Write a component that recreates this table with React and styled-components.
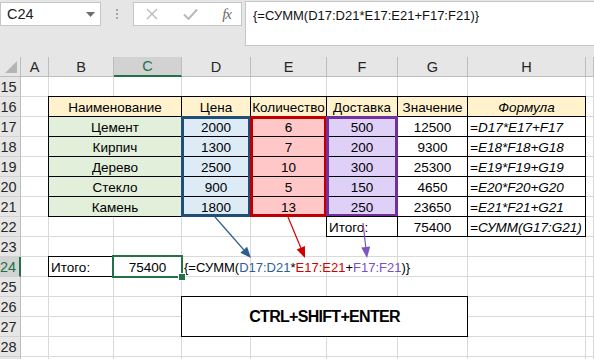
import React from "react";
import styled, { createGlobalStyle } from "styled-components";

const GlobalStyle = createGlobalStyle`
  html, body { margin: 0; padding: 0; background: #ffffff; }
  body { font-family: "Liberation Sans", Arial, sans-serif; overflow: hidden; }
`;

const GREEN = "#217346";
const GRID = "#d9d9d9";

const Window = styled.div`
  width: 594px;
  height: 359px;
  overflow: hidden;
  display: flex;
  flex-direction: column;
  background: #fff;
`;

/* ---------- formula bar ---------- */

const Toolbar = styled.div`
  height: 57px;
  flex: none;
  background: #e6e6e6;
  display: flex;
  align-items: flex-start;
  padding-top: 2px;
  box-sizing: border-box;
`;

const NameBox = styled.div`
  width: 101px;
  height: 24px;
  box-sizing: border-box;
  background: #fff;
  border: 1px solid #c6c6c6;
  display: flex;
  align-items: center;
  justify-content: space-between;
  padding: 0 5px 0 6px;
  font-size: 14.5px;
  color: #222;
`;

const Grip = styled.div`
  width: 32px;
  height: 24px;
  display: flex;
  flex-direction: column;
  align-items: center;
  justify-content: center;
  gap: 2px;
`;

const GripDot = styled.span`
  width: 2px;
  height: 2px;
  background: #a6a6a6;
`;

const FxBox = styled.div`
  width: 109px;
  height: 24px;
  box-sizing: border-box;
  background: #fff;
  border: 1px solid #c6c6c6;
  display: flex;
  align-items: center;
  justify-content: space-between;
  padding: 0 10px 0 12px;
`;

const FxLabel = styled.span`
  font-family: "Liberation Serif", "Times New Roman", serif;
  font-style: italic;
  font-size: 15px;
  color: #6a6a6a;
  letter-spacing: -1px;
`;

const FormulaInput = styled.div`
  flex: 1;
  margin-left: 3px;
  margin-top: -1px;
  height: 45px;
  box-sizing: border-box;
  background: #fff;
  border: 1px solid #c6c6c6;
  border-right: none;
  padding: 6px 0 0 7px;
  font-size: 13px;
  color: #111;
`;

/* ---------- sheet grid ---------- */

const Sheet = styled.div`
  position: relative;
  display: grid;
  grid-template-columns: 21px 28px 65px 68px 69px 76px 71px 70px 118px 1fr;
  grid-template-rows: repeat(17, 20px);
  font-size: 13.5px;
  color: #000;
`;

const Corner = styled.div`
  grid-column: 1;
  grid-row: 1;
  background: #e6e6e6;
  border-right: 1px solid #bdbdbd;
  border-bottom: 1px solid #bdbdbd;
  display: flex;
  align-items: flex-end;
  justify-content: flex-end;
  padding: 0 3px 3px 0;
`;

const ColHead = styled.div`
  grid-column: ${(p) => p.$col};
  grid-row: 1;
  background: ${(p) => (p.$active ? "#d2d2d2" : "#e6e6e6")};
  border-right: 1px solid #bdbdbd;
  border-bottom: ${(p) => (p.$active ? `2px solid ${GREEN}` : "1px solid #bdbdbd")};
  display: flex;
  align-items: center;
  justify-content: center;
  font-size: 14.5px;
  color: ${(p) => (p.$active ? GREEN : "#262626")};
`;

const RowHead = styled.div`
  grid-column: 1;
  grid-row: ${(p) => p.$row};
  background: ${(p) => (p.$active ? "#d2d2d2" : "#e6e6e6")};
  border-right: ${(p) => (p.$active ? `2px solid ${GREEN}` : "1px solid #bdbdbd")};
  border-bottom: 1px solid #d0d0d0;
  display: flex;
  align-items: center;
  justify-content: center;
  padding-right: 3px;
  font-size: 14.5px;
  color: ${(p) => (p.$active ? GREEN : "#262626")};
`;

const GridCell = styled.div`
  grid-column: ${(p) => p.$col};
  grid-row: ${(p) => p.$row};
  border-right: 1px solid ${GRID};
  border-bottom: 1px solid ${GRID};
`;

const DataCell = styled.div`
  grid-column: ${(p) => p.$col} / span ${(p) => p.$span || 1};
  grid-row: ${(p) => p.$row} / span ${(p) => p.$rows || 1};
  margin: -1px 0 0 -1px;
  border: 1px solid #000;
  background: ${(p) => p.$fill || "#fff"};
  display: flex;
  align-items: center;
  justify-content: ${(p) => p.$align || "center"};
  padding: 1px 0 0 ${(p) => (p.$align === "flex-start" ? "2px" : "0")};
  font-style: ${(p) => (p.$italic ? "italic" : "normal")};
  white-space: nowrap;
  overflow: hidden;
`;

const RangeFrame = styled.div`
  grid-column: ${(p) => p.$col};
  grid-row: ${(p) => p.$row} / span ${(p) => p.$rows};
  margin: -1px 0 0 -1px;
  border: 3px solid ${(p) => p.$color};
`;

const Selection = styled.div`
  grid-column: ${(p) => p.$col};
  grid-row: ${(p) => p.$row};
  margin: -2px -1px -1px -2px;
  border: 2px solid ${GREEN};
  position: relative;
`;

const FillHandle = styled.span`
  position: absolute;
  right: -5px;
  bottom: -5px;
  width: 6px;
  height: 6px;
  background: ${GREEN};
  border: 1px solid #fff;
`;

const SpillText = styled.div`
  grid-column: ${(p) => p.$col} / span ${(p) => p.$span};
  grid-row: ${(p) => p.$row};
  display: flex;
  align-items: center;
  padding: 1px 0 0 2px;
  white-space: nowrap;
  font-size: 13px;
`;

const Ref = styled.span`
  color: ${(p) => p.$tone};
`;

const KeysBox = styled.div`
  grid-column: 5 / span 4;
  grid-row: 13 / span 2;
  margin: -1px 0 0 -1px;
  border: 1px solid #000;
  background: #fff;
  display: flex;
  align-items: center;
  justify-content: center;
  font-weight: bold;
  font-size: 16px;
  letter-spacing: -0.7px;
`;

const Arrows = styled.svg`
  position: absolute;
  left: 0;
  top: 0;
  width: 594px;
  height: 302px;
  pointer-events: none;
`;

/* ---------- data ---------- */

const COL_LETTERS = ["A", "B", "C", "D", "E", "F", "G", "H", ""];
const FIRST_ROW = 15;
const LAST_LABELLED_ROW = 28;
const ROWS = Array.from({ length: 16 }, (_, i) => FIRST_ROW + i);
const gr = (r) => r - FIRST_ROW + 2; // sheet row -> grid row
const gc = (letter) => COL_LETTERS.indexOf(letter) + 2; // column letter -> grid column

const materials = [
  { name: "Цемент", price: 2000, qty: 6, ship: 500, value: 12500, f: "=D17*E17+F17" },
  { name: "Кирпич", price: 1300, qty: 7, ship: 200, value: 9300, f: "=E18*F18+G18" },
  { name: "Дерево", price: 2500, qty: 10, ship: 300, value: 25300, f: "=E19*F19+G19" },
  { name: "Стекло", price: 900, qty: 5, ship: 150, value: 4650, f: "=E20*F20+G20" },
  { name: "Камень", price: 1800, qty: 13, ship: 250, value: 23650, f: "=E21*F21+G21" },
];

const FILL = {
  head: "#fff2cc",
  name: "#e2efda",
  price: "#ddebf7",
  qty: "#ffc7c7",
  ship: "#dfd0f8",
};

const BLUE = "#1f4e79";
const RED = "#c00000";
const PURPLE = "#7030a0";

function Arrow({ x1, y1, x2, y2, color }) {
  const a = Math.atan2(y2 - y1, x2 - x1);
  const len = 11;
  const half = 4.5;
  const bx = x2 - len * Math.cos(a);
  const by = y2 - len * Math.sin(a);
  const px = -Math.sin(a) * half;
  const py = Math.cos(a) * half;
  return (
    <g>
      <line x1={x1} y1={y1} x2={bx} y2={by} stroke={color} strokeWidth="1.2" />
      <polygon
        points={`${x2},${y2} ${bx + px},${by + py} ${bx - px},${by - py}`}
        fill={color}
      />
    </g>
  );
}

export default function App() {
  return (
    <Window>
      <GlobalStyle />
      <Toolbar>
        <NameBox>
          <span>C24</span>
          <svg width="9" height="5" viewBox="0 0 9 5">
            <polygon points="0,0 9,0 4.5,5" fill="#6d6d6d" />
          </svg>
        </NameBox>
        <Grip>
          <GripDot />
          <GripDot />
          <GripDot />
        </Grip>
        <FxBox>
          <svg width="12" height="12" viewBox="0 0 12 12">
            <path d="M1 1 L11 11 M11 1 L1 11" stroke="#b9b9b9" strokeWidth="1.3" />
          </svg>
          <svg width="15" height="12" viewBox="0 0 15 12">
            <path d="M1 6.5 L5.5 11 L14 1.5" stroke="#b9b9b9" strokeWidth="2" fill="none" />
          </svg>
          <FxLabel>fx</FxLabel>
        </FxBox>
        <FormulaInput>{"{=СУММ(D17:D21*E17:E21+F17:F21)}"}</FormulaInput>
      </Toolbar>

      <Sheet>
        <Corner>
          <svg width="12" height="12" viewBox="0 0 12 12">
            <polygon points="12,0 12,12 0,12" fill="#b4b4b4" />
          </svg>
        </Corner>
        {COL_LETTERS.map((l, i) => (
          <ColHead key={l + i} $col={i + 2} $active={l === "C"}>
            {l}
          </ColHead>
        ))}
        {ROWS.map((r) => (
          <React.Fragment key={r}>
            <RowHead $row={gr(r)} $active={r === 24}>
              {r <= LAST_LABELLED_ROW ? r : ""}
            </RowHead>
            {COL_LETTERS.map((l, i) => (
              <GridCell key={l + i} $row={gr(r)} $col={i + 2} />
            ))}
          </React.Fragment>
        ))}

        {/* header row */}
        <DataCell $row={gr(16)} $col={gc("B")} $span={2} $fill={FILL.head}>Наименование</DataCell>
        <DataCell $row={gr(16)} $col={gc("D")} $fill={FILL.head}>Цена</DataCell>
        <DataCell $row={gr(16)} $col={gc("E")} $fill={FILL.head}>Количество</DataCell>
        <DataCell $row={gr(16)} $col={gc("F")} $fill={FILL.head}>Доставка</DataCell>
        <DataCell $row={gr(16)} $col={gc("G")} $fill={FILL.head}>Значение</DataCell>
        <DataCell $row={gr(16)} $col={gc("H")} $fill={FILL.head} $italic>Формула</DataCell>

        {materials.map((m, i) => {
          const r = gr(17 + i);
          return (
            <React.Fragment key={m.name}>
              <DataCell $row={r} $col={gc("B")} $span={2} $fill={FILL.name}>{m.name}</DataCell>
              <DataCell $row={r} $col={gc("D")} $fill={FILL.price}>{m.price}</DataCell>
              <DataCell $row={r} $col={gc("E")} $fill={FILL.qty}>{m.qty}</DataCell>
              <DataCell $row={r} $col={gc("F")} $fill={FILL.ship}>{m.ship}</DataCell>
              <DataCell $row={r} $col={gc("G")}>{m.value}</DataCell>
              <DataCell $row={r} $col={gc("H")} $align="flex-start" $italic>{m.f}</DataCell>
            </React.Fragment>
          );
        })}

        <RangeFrame $row={gr(17)} $rows={5} $col={gc("D")} $color={BLUE} />
        <RangeFrame $row={gr(17)} $rows={5} $col={gc("E")} $color={RED} />
        <RangeFrame $row={gr(17)} $rows={5} $col={gc("F")} $color={PURPLE} />

        {/* totals */}
        <DataCell $row={gr(22)} $col={gc("F")} $align="flex-start">Итого:</DataCell>
        <DataCell $row={gr(22)} $col={gc("G")}>75400</DataCell>
        <DataCell $row={gr(22)} $col={gc("H")} $align="flex-start" $italic>=СУММ(G17:G21)</DataCell>

        <DataCell $row={gr(24)} $col={gc("B")} $align="flex-start">Итого:</DataCell>
        <DataCell $row={gr(24)} $col={gc("C")}>75400</DataCell>
        <Selection $row={gr(24)} $col={gc("C")}>
          <FillHandle />
        </Selection>
        <SpillText $row={gr(24)} $col={gc("D")} $span={4}>
          {"{=СУММ("}
          <Ref $tone="#2e5e9a">D17:D21</Ref>
          {"*"}
          <Ref $tone="#d40000">E17:E21</Ref>
          {"+"}
          <Ref $tone="#7b4fc0">F17:F21</Ref>
          {")}"}
        </SpillText>

        <KeysBox>CTRL+SHIFT+ENTER</KeysBox>

        <Arrows viewBox="0 0 594 302">
          <Arrow x1={215} y1={160} x2={251} y2={201} color="#2f5f8f" />
          <Arrow x1={288} y1={160} x2={305} y2={201} color="#d00000" />
          <Arrow x1={363} y1={166} x2={367} y2={201} color="#7d55c0" />
        </Arrows>
      </Sheet>
    </Window>
  );
}
